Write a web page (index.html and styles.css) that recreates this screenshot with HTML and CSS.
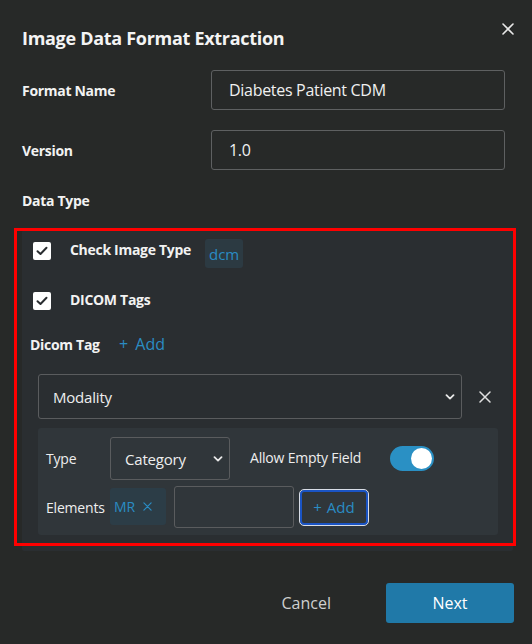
FILE: index.html
```html
<!DOCTYPE html>
<html>
<head>
<meta charset="utf-8">
<link rel="stylesheet" href="styles.css">
</head>
<body>
<div class="modal">
  <div class="header">
    <h1 class="title">Image Data Format Extraction</h1>
    <button class="close" aria-label="Close">
      <svg width="12" height="12" viewBox="0 0 12 12"><path d="M1 1L11 11M11 1L1 11" stroke="#e8e8e8" stroke-width="1.6" stroke-linecap="round"/></svg>
    </button>
  </div>

  <div class="field">
    <label class="label">Format Name</label>
    <div class="input">Diabetes Patient CDM</div>
  </div>
  <div class="field field-2">
    <label class="label">Version</label>
    <div class="input">1.0</div>
  </div>
  <div class="label datatype">Data Type</div>

  <div class="panel">
    <div class="check-row">
      <span class="checkbox"><svg width="12" height="10" viewBox="0 0 12 10"><path d="M1.5 5.2L4.5 8L10.5 1.8" fill="none" stroke="#2a2e31" stroke-width="2" stroke-linecap="round" stroke-linejoin="round"/></svg></span>
      <span class="check-label">Check Image Type</span>
      <span class="tag">dcm</span>
    </div>
    <div class="check-row row-2">
      <span class="checkbox"><svg width="12" height="10" viewBox="0 0 12 10"><path d="M1.5 5.2L4.5 8L10.5 1.8" fill="none" stroke="#2a2e31" stroke-width="2" stroke-linecap="round" stroke-linejoin="round"/></svg></span>
      <span class="check-label">DICOM Tags</span>
    </div>
    <div class="dicom-row">
      <span class="dicom-label">Dicom Tag</span>
      <span class="link-add"><span class="plus">+</span> Add</span>
    </div>
    <div class="select-row">
      <div class="select big">
        <span>Modality</span>
        <svg class="chev" width="10" height="6" viewBox="0 0 10 6"><path d="M1.5 1.2L5 4.6L8.5 1.2" fill="none" stroke="#e8e8e8" stroke-width="1.8" stroke-linecap="round" stroke-linejoin="round"/></svg>
      </div>
      <svg class="remove" width="12" height="12" viewBox="0 0 12 12"><path d="M1 1L11 11M11 1L1 11" stroke="#e0e0e0" stroke-width="1.5" stroke-linecap="round"/></svg>
    </div>
    <div class="subpanel">
      <div class="sub-row">
        <span class="sub-label type-label">Type</span>
        <div class="select small">
          <span>Category</span>
          <svg class="chev" width="10" height="6" viewBox="0 0 10 6"><path d="M1.5 1.2L5 4.6L8.5 1.2" fill="none" stroke="#e8e8e8" stroke-width="1.8" stroke-linecap="round" stroke-linejoin="round"/></svg>
        </div>
        <span class="sub-label allow">Allow Empty Field</span>
        <span class="toggle"><span class="knob"></span></span>
      </div>
      <div class="sub-row row-el">
        <span class="sub-label type-label">Elements</span>
        <span class="chip">MR <svg width="9" height="9" viewBox="0 0 10 10"><path d="M1 1L9 9M9 1L1 9" stroke="#2a8cc4" stroke-width="1.3" stroke-linecap="round"/></svg></span>
        <div class="el-input"></div>
        <span class="add-btn"><span class="plus">+</span> Add</span>
      </div>
    </div>
  </div>

  <div class="footer">
    <button class="cancel">Cancel</button>
    <button class="next">Next</button>
  </div>
  <div class="annot"></div>
</div>
</body>
</html>
```

FILE: styles.css
```css
* { box-sizing: border-box; }
html, body { margin: 0; padding: 0; }
body {
  width: 532px;
  height: 644px;
  background: #272928;
  font-family: "Open Sans", "Noto Sans", sans-serif;
  color: #f2f2f2;
  overflow: hidden;
}
.modal {
  position: relative;
  padding: 0 18px 0 22px;
}
.header {
  display: flex;
  justify-content: space-between;
  align-items: flex-start;
  height: 70px;
}
.title {
  margin: 25px 0 0 0;
  font-size: 18px;
  line-height: 26px;
  font-weight: 700;
  letter-spacing: -0.3px;
  color: #f4f4f4;
}
.close {
  margin-top: 23px;
  background: none;
  border: none;
  padding: 0;
  width: 12px;
  height: 12px;
  display: flex;
}
.field {
  display: flex;
  align-items: center;
  height: 40px;
}
.field-2 { margin-top: 20px; }
.label {
  width: 189px;
  font-size: 14px;
  font-weight: 700;
  letter-spacing: -0.3px;
  color: #f2f2f2;
}
.input {
  width: 294px;
  height: 40px;
  border: 1px solid #5e6061;
  border-radius: 3px;
  padding-left: 17px;
  display: flex;
  align-items: center;
  font-size: 16px;
  letter-spacing: -0.3px;
  color: #f0f0f0;
}
.datatype {
  margin-top: 21px;
  line-height: 20px;
}
.panel {
  margin-top: 19px;
  margin-right: 1px;
  background: #2a2e31;
  border-radius: 2px;
  padding: 6px 14px 16px 8px;
}
.check-row {
  display: flex;
  align-items: center;
  height: 30px;
  padding-left: 3px;
}
.row-2 { margin-top: 26px; height: 18px; }
.checkbox {
  width: 18px;
  height: 18px;
  background: #ffffff;
  border-radius: 2px;
  display: flex;
  align-items: center;
  justify-content: center;
  margin-right: 19px;
}
.check-label {
  font-size: 14px;
  font-weight: 700;
  letter-spacing: -0.3px;
  color: #f2f2f2;
  margin-top: -3px;
}
.tag {
  margin-left: 14px;
  background: #2c3a42;
  color: #2a8cc4;
  border-radius: 3px;
  font-size: 15px;
  height: 29px;
  padding: 0 4px;
  display: flex;
  align-items: center;
  margin-top: 5px;
}
.dicom-row {
  display: flex;
  align-items: center;
  margin-top: 23px;
  height: 22px;
}
.dicom-label {
  font-size: 14px;
  font-weight: 700;
  letter-spacing: -0.3px;
  color: #f2f2f2;
  width: 89px;
}
.link-add {
  color: #2a8cc4;
  font-size: 16px;
}
.plus { margin-right: 3px; }
.select-row {
  display: flex;
  align-items: center;
  margin-top: 19px;
  margin-left: 8px;
}
.select {
  border: 1px solid #5a5c5e;
  border-radius: 3px;
  display: flex;
  align-items: center;
  justify-content: space-between;
  font-size: 15px;
  letter-spacing: -0.2px;
  color: #eeeeee;
}
.select.big {
  width: 424px;
  height: 45px;
  padding: 0 6px 0 14px;
}
.remove { margin-left: 17px; }
.subpanel {
  margin: 9px 0 0 8px;
  width: 460px;
  background: #30363a;
  border-radius: 3px;
  padding: 9px 0 7px 8px;
}
.sub-row {
  display: flex;
  align-items: center;
  height: 43px;
}
.row-el { margin-top: 6px; height: 42px; }
.sub-label {
  font-size: 14px;
  color: #eeeeee;
  letter-spacing: -0.2px;
}
.type-label { width: 64px; }
.select.small {
  width: 120px;
  height: 43px;
  padding: 0 6px 0 14px;
}
.allow {
  margin-left: 20px;
  margin-top: -3px;
}
.toggle {
  margin-left: 29px;
  width: 44px;
  height: 25px;
  border-radius: 13px;
  background: #2a90c4;
  display: flex;
  justify-content: flex-end;
  align-items: center;
  padding-right: 2px;
}
.knob {
  width: 21px;
  height: 21px;
  border-radius: 50%;
  background: #ffffff;
}
.chip {
  height: 37px;
  width: 56px;
  background: #2c3d47;
  border-radius: 3px;
  color: #2a8cc4;
  font-size: 14px;
  display: flex;
  align-items: center;
  gap: 8px;
  padding-left: 4px;
  margin-top: -2px;
}
.el-input {
  margin-left: 8px;
  width: 120px;
  height: 42px;
  border: 1px solid #5a5c5e;
  border-radius: 3px;
}
.add-btn {
  margin-left: 6px;
  width: 68px;
  height: 35px;
  border: 2px solid #1a54c4;
  outline: 1px solid #d8dde6;
  border-radius: 4px;
  color: #2a8cc4;
  font-size: 15px;
  display: flex;
  align-items: center;
  justify-content: center;
}
.add-btn .plus { margin-right: 5px; }
.footer {
  display: flex;
  justify-content: flex-end;
  align-items: center;
  margin-top: 32px;
}
.cancel {
  background: none;
  border: none;
  color: #cfcfcf;
  font-family: inherit;
  font-size: 16px;
  margin-right: 55px;
  padding: 0;
}
.next {
  width: 128px;
  height: 40px;
  background: #2079a8;
  border: none;
  border-radius: 3px;
  color: #ffffff;
  font-family: inherit;
  font-size: 16px;
}
.annot {
  position: absolute;
  left: 14px;
  top: 228px;
  width: 502px;
  height: 318px;
  border: 3px solid #ff0000;
  pointer-events: none;
}
```
